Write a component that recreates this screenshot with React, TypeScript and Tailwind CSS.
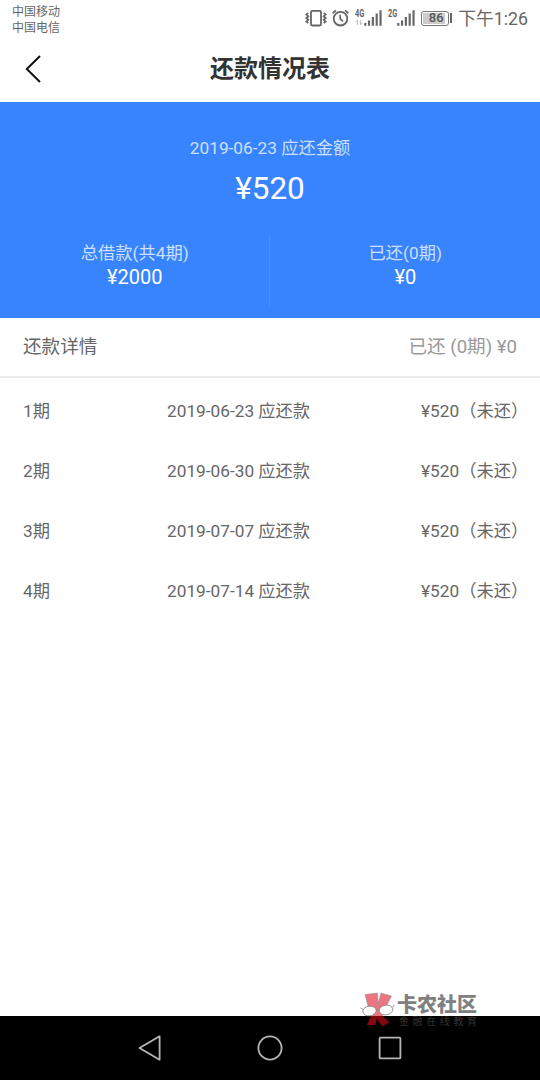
const plans = [
  { term: "1期", date: "2019-06-23 应还款", amount: "¥520", status: "（未还）" },
  { term: "2期", date: "2019-06-30 应还款", amount: "¥520", status: "（未还）" },
  { term: "3期", date: "2019-07-07 应还款", amount: "¥520", status: "（未还）" },
  { term: "4期", date: "2019-07-14 应还款", amount: "¥520", status: "（未还）" },
];

export default function App() {
  return (
    <div lang="zh-CN" className="flex h-[1080px] w-[540px] flex-col overflow-hidden whitespace-nowrap bg-white font-[Roboto,'Noto_Sans_CJK_SC',sans-serif] text-[#666]">
      <StatusBar />

      <header className="grid h-[66px] shrink-0 grid-cols-[66px_1fr_66px] items-center">
        <svg className="ml-6 h-7 w-5" viewBox="0 0 20 28" fill="none" stroke="#111" strokeWidth="2">
          <path d="M16 1 L2.8 14 L16 27" />
        </svg>
        <h1 className="text-center text-2xl font-bold leading-8 text-[#333]">还款情况表</h1>
      </header>

      <section className="h-[216px] shrink-0 bg-[#3884ff] pt-[34px] text-center text-white">
        <p className="text-[17.25px] leading-6 text-white/75">2019-06-23 应还金额</p>
        <p className="text-[31.5px] leading-[58px]">¥520</p>
        <div className="mt-4 flex">
          <Total label="总借款(共4期)" value="¥2000" />
          <div className="-ml-px mr-px h-[72px] w-px bg-white/10" />
          <Total label="已还(0期)" value="¥0" />
        </div>
      </section>

      <div className="flex h-[60px] shrink-0 items-center justify-between border-b-2 border-[#ececec] px-[23px] pt-0.5 text-[18.6px]">
        <span>还款详情</span>
        <span className="text-[#999]">已还 (0期) ¥0</span>
      </div>

      <ul className="flex-1 pt-1 text-[17.25px]">
        {plans.map((plan) => (
          <li key={plan.term} className="grid h-[60px] grid-cols-[144px_254px_1fr] items-center pl-[23px]">
            <span>{plan.term}</span>
            <span>{plan.date}</span>
            <span>
              {plan.amount}
              <span className="font-['Noto_Sans_CJK_SC',sans-serif] leading-none">{plan.status}</span>
            </span>
          </li>
        ))}
      </ul>

      <NavBar />
    </div>
  );
}

function Total({ label, value }: { label: string; value: string }) {
  return (
    <div className="flex-1 pt-[6.5px]">
      <div className="text-[17.25px] leading-6 text-white/75">{label}</div>
      <div className="text-xl leading-6">{value}</div>
    </div>
  );
}

function StatusBar() {
  return (
    <div className="flex h-9 shrink-0 items-center justify-between pl-3 pr-3">
      <div className="pt-1 text-xs leading-4">
        <div>中国移动</div>
        <div>中国电信</div>
      </div>
      <div className="flex items-center">
        <svg className="h-5 w-6" viewBox="0 0 24 20" fill="none" stroke="#666" strokeWidth="1.8">
          <rect x="7" y="2.9" width="10" height="14.6" rx="1.2" />
          <path d="M4.3 5 L2.3 6.5 L4.3 8.2 L2.3 10 L4.3 11.8 L2.3 13.5 L4.3 15.2" strokeWidth="1.7" />
          <path d="M19.7 5 L21.7 6.5 L19.7 8.2 L21.7 10 L19.7 11.8 L21.7 13.5 L19.7 15.2" strokeWidth="1.7" />
        </svg>
        <svg className="ml-0.5 h-5 w-5" viewBox="0 0 20 20" fill="none" stroke="#666" strokeWidth="1.8">
          <circle cx="10.5" cy="10.7" r="6.8" />
          <path d="M10.2 6.7 V10.8 L13 13.4" strokeWidth="1.7" />
          <path d="M2.6 5.2 L6 2.4 M18.4 5.2 L15 2.4" />
        </svg>
        <Signal label="4G" data />
        <Signal label="2G" />
        <div className="ml-1.5 flex items-center gap-px">
          <div className="h-[15px] w-7 rounded-[3px] border border-[#777] p-px">
            <div className="flex h-full w-[22px] items-center justify-center bg-[#ccc] pl-1 text-[13px] font-medium text-[#555]">86</div>
          </div>
          <div className="h-2.5 w-0.5 bg-[#666]" />
        </div>
        <span className="ml-1.5 mt-0.5 text-[17.8px]">下午1:26</span>
      </div>
    </div>
  );
}

function Signal({ label, data }: { label: string; data?: boolean }) {
  return (
    <svg className="ml-1 h-5 w-[28.5px]" viewBox="0 0 29 20" fill="none" stroke="#666">
      <text x="1" y="8.5" fill="#666" stroke="none" fontSize="10.5" fontWeight="700" textLength="9.5" lengthAdjust="spacingAndGlyphs">
        {label}
      </text>
      {data && <path d="M3.5 17 V12 L1.8 14 M6.5 12 V17 L8.2 15" stroke="#bbb" />}
      <path d="M11.5 18 V15 M15.3 18 V12.5 M19.2 18 V9 M23.1 18 V5.5 M27 18 V2" strokeWidth="2.2" />
    </svg>
  );
}

function NavBar() {
  return (
    <nav className="relative flex h-16 shrink-0 items-center justify-center gap-[88px] bg-black">
      <svg className="size-8" viewBox="0 0 32 32" fill="none" stroke="#b5b5b5" strokeWidth="1.8" strokeLinejoin="round">
        <path d="M5.5 16 L25.6 4.2 V27.8 Z" />
      </svg>
      <svg className="size-8" viewBox="0 0 32 32" fill="none" stroke="#b5b5b5" strokeWidth="1.8">
        <circle cx="16" cy="16" r="11.6" />
      </svg>
      <svg className="size-8" viewBox="0 0 32 32" fill="none" stroke="#b5b5b5" strokeWidth="1.8">
        <rect x="5.6" y="5.6" width="20.8" height="20.8" rx="1" />
      </svg>
      <Watermark />
    </nav>
  );
}

function Watermark() {
  return (
    <div className="absolute -top-6 left-[360px] flex">
      <svg className="h-9 w-9" viewBox="0 0 36 36">
        <path d="M5 2.5 L17.5 1 L18.5 15 L9 18 Z M21 1 L31.5 4 L25 17 L17 15 Z" fill="#ed7580" stroke="#999" strokeWidth="0.6" />
        <path d="M14 15 H21 L23 24 H12 Z" fill="#ed7580" />
        <path d="M11 24 H22.5 L29.5 30.5 L22.5 34 L16.5 27 L15.5 33 L7 33 Z" fill="#84070f" />
        <ellipse cx="9.5" cy="19" rx="6.7" ry="4.8" fill="#fff" stroke="#888" strokeWidth="0.8" transform="rotate(-8 9.5 19)" />
        <ellipse cx="26" cy="18" rx="6.9" ry="4.8" fill="#fff" stroke="#888" strokeWidth="0.8" transform="rotate(-8 26 18)" />
        <path d="M3.2 17.5 L0.5 16 M16 18 Q17.5 16.5 19.3 18 M32 15.5 L34.5 13" fill="none" stroke="#888" strokeWidth="0.9" />
      </svg>
      <div className="pl-px">
        <div className="pt-px text-[20px] font-black leading-6 text-[#808080]">卡农社区</div>
        <div className="-mt-px pl-0.5 text-[10px] leading-3 tracking-[3.6px] text-[#333]">金融在线教育</div>
      </div>
    </div>
  );
}
